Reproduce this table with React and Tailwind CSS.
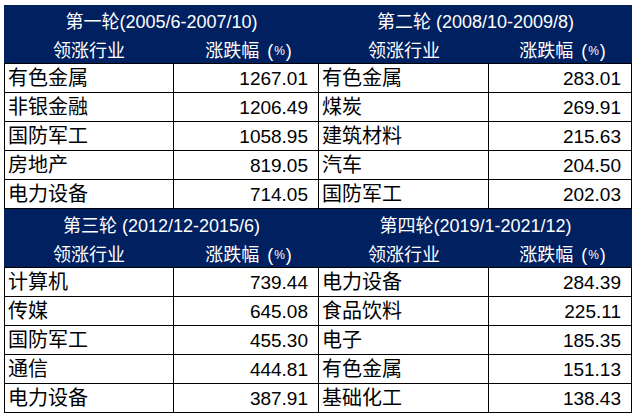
const rounds = [
  {
    titles: ["第一轮(2005/6-2007/10)", "第二轮 (2008/10-2009/8)"],
    rows: [
      ["有色金属", "1267.01", "有色金属", "283.01"],
      ["非银金融", "1206.49", "煤炭", "269.91"],
      ["国防军工", "1058.95", "建筑材料", "215.63"],
      ["房地产", "819.05", "汽车", "204.50"],
      ["电力设备", "714.05", "国防军工", "202.03"],
    ],
  },
  {
    titles: ["第三轮 (2012/12-2015/6)", "第四轮(2019/1-2021/12)"],
    rows: [
      ["计算机", "739.44", "电力设备", "284.39"],
      ["传媒", "645.08", "食品饮料", "225.11"],
      ["国防军工", "455.30", "电子", "185.35"],
      ["通信", "444.81", "有色金属", "151.13"],
      ["电力设备", "387.91", "基础化工", "138.43"],
    ],
  },
];

const font = { fontFamily: '"Liberation Sans", "Noto Sans CJK SC", sans-serif' };

function HeaderHalf({ title }) {
  return (
    <div className="flex flex-col text-white">
      <div className="h-[29px] pt-[4px] flex items-center justify-center text-[18px] leading-none">
        {title}
      </div>
      <div className="h-[29px] pt-[4px] grid grid-cols-[170px_1fr] text-[18px] leading-none">
        <div className="flex items-center justify-center">领涨行业</div>
        <div className="flex items-center justify-center pl-[4px]">
          涨跌幅<span className="ml-[8px]">(</span>
          <span className="text-[12px] mx-[1px]">%</span>
          <span>)</span>
        </div>
      </div>
    </div>
  );
}

function Block({ data }) {
  return (
    <div>
      <div className="bg-[#002060] grid grid-cols-[315px_313px]">
        <HeaderHalf title={data.titles[0]} />
        <HeaderHalf title={data.titles[1]} />
      </div>
      <div className="grid grid-cols-[170px_145px_170px_143px]">
        {data.rows.map((r, i) => (
          <div key={i} className="contents">
            {r.map((c, j) => {
              const isNum = j % 2 === 1;
              return (
                <div
                  key={j}
                  className={
                    "flex items-center border-r border-b border-black h-[29px] text-black leading-none " +
                    (i === 0 ? "border-t h-[30px] " : "") +
                    (j === 0 ? "border-l " : "") +
                    (isNum
                      ? "justify-end pr-[10px] text-[19px] text-[#1a1a1a]"
                      : "pl-[3px] text-[20px]")
                  }
                >
                  {c}
                </div>
              );
            })}
          </div>
        ))}
      </div>
    </div>
  );
}

export default function App() {
  return (
    <div className="w-[639px] h-[420px] bg-white" style={font}>
      <div className="pt-[5px] pl-[4px] w-[632px]">
        <Block data={rounds[0]} />
        <Block data={rounds[1]} />
      </div>
    </div>
  );
}
